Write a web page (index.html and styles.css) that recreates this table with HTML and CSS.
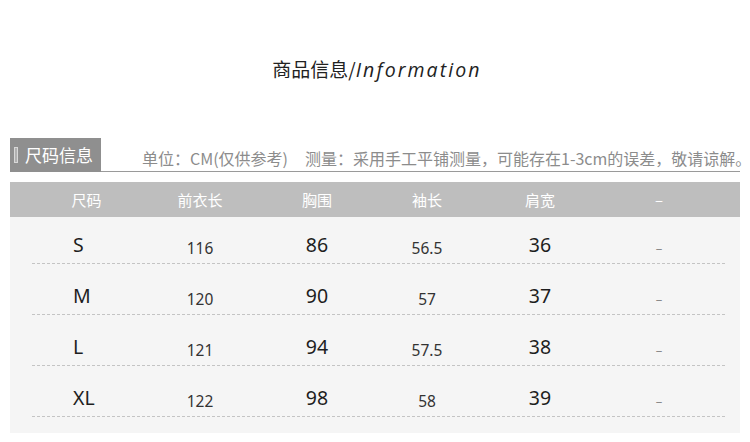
FILE: index.html
```html
<!DOCTYPE html>
<html lang="zh">
<head>
<meta charset="utf-8">
<link rel="stylesheet" href="styles.css">
</head>
<body>
<div class="page">
  <h1 class="title">商品信息/<span class="en">Information</span></h1>
  <div class="section-head">
    <div class="label"><span class="bar"></span><span class="label-text">尺码信息</span></div>
    <div class="note"><span>单位：CM(仅供参考)</span><span class="note-gap">测量：采用手工平铺测量，可能存在1-3cm的误差，敬请谅解。</span></div>
  </div>
  <div class="table">
    <div class="thead">
      <span>尺码</span><span>前衣长</span><span>胸围</span><span>袖长</span><span>肩宽</span><span>–</span>
    </div>
    <div class="tbody">
      <div class="row"><span class="big size">S</span><span class="small">116</span><span class="big">86</span><span class="small">56.5</span><span class="big">36</span><span class="dash">–</span></div>
      <div class="row"><span class="big size">M</span><span class="small">120</span><span class="big">90</span><span class="small">57</span><span class="big">37</span><span class="dash">–</span></div>
      <div class="row"><span class="big size">L</span><span class="small">121</span><span class="big">94</span><span class="small">57.5</span><span class="big">38</span><span class="dash">–</span></div>
      <div class="row"><span class="big size">XL</span><span class="small">122</span><span class="big">98</span><span class="small">58</span><span class="big">39</span><span class="dash">–</span></div>
    </div>
  </div>
</div>
</body>
</html>
```
FILE: styles.css
```css
html, body {
  margin: 0;
  padding: 0;
  background: #ffffff;
}
body {
  font-family: "Noto Sans", "Noto Sans CJK SC", sans-serif;
  color: #222;
  width: 750px;
  height: 442px;
  overflow: hidden;
}
.page {
  padding-top: 56px;
}
.title {
  margin: 0;
  text-align: center;
  font-weight: normal;
  font-size: 19px;
  line-height: 26px;
  height: 26px;
  color: #222;
  font-family: "Noto Sans CJK SC", sans-serif;
  padding-left: 4px;
}
.title .en {
  font-family: "Open Sans", "Noto Sans", sans-serif;
  font-style: italic;
  font-size: 19.5px;
  letter-spacing: 2.1px;
}
.section-head {
  display: flex;
  margin: 56px 10px 0 10px;
  height: 34px;
}
.label {
  flex: 0 0 91px;
  width: 91px;
  height: 34px;
  background: #8f8f8f;
  color: #fff;
  font-family: "Noto Sans CJK SC", sans-serif;
  font-size: 17px;
  line-height: 34px;
  display: flex;
  align-items: center;
  box-sizing: border-box;
  padding-left: 4px;
  white-space: nowrap;
}
.bar {
  flex: 0 0 auto;
  display: inline-block;
  width: 2px;
  height: 14px;
  border: 1px solid #d8d8d8;
  background: #b0b0b0;
  margin-right: 7px;
}
.label-text {
  flex: 0 0 auto;
}
.note {
  flex: 1 1 auto;
  min-width: 0;
  border-bottom: 1px solid #9a9a9a;
  display: flex;
  align-items: flex-end;
  padding-left: 41px;
  padding-bottom: 2px;
  font-family: "Noto Sans CJK SC", sans-serif;
  font-size: 16px;
  line-height: 22px;
  color: #8c8c8c;
  white-space: nowrap;
}
.note span {
  flex: 0 0 auto;
}
.note-gap {
  margin-left: 17px;
}
.table {
  margin: 10px 10px 0 10px;
}
.thead {
  display: grid;
  grid-template-columns: 109px 118px 116px 104px 122px 116px;
  height: 35px;
  align-items: center;
  background: #bebebe;
  padding-left: 22px;
  color: #fff;
  font-family: "Noto Sans CJK SC", sans-serif;
  font-size: 15px;
  line-height: 20px;
  text-align: center;
}
.tbody {
  background: #f5f5f5;
  padding: 0 15px 16px 22px;
}
.row {
  display: grid;
  grid-template-columns: 109px 118px 116px 104px 122px 116px;
  height: 51px;
  box-sizing: border-box;
  border-bottom: 1px dashed #c4c4c4;
  align-items: end;
  padding-bottom: 5px;
  text-align: center;
  font-family: "Noto Sans", sans-serif;
}
.row:first-child {
  height: 47px;
}
.big {
  font-size: 19.5px;
  line-height: 24px;
  color: #1e1e1e;
  padding-bottom: 1px;
}
.size {
  text-align: left;
  padding-left: 41px;
}
.small {
  font-size: 15.5px;
  line-height: 20px;
  color: #333;
  padding-bottom: 0;
}
.dash {
  font-size: 13px;
  line-height: 18px;
  color: #8a8a8a;
  padding-bottom: 1px;
}
```
